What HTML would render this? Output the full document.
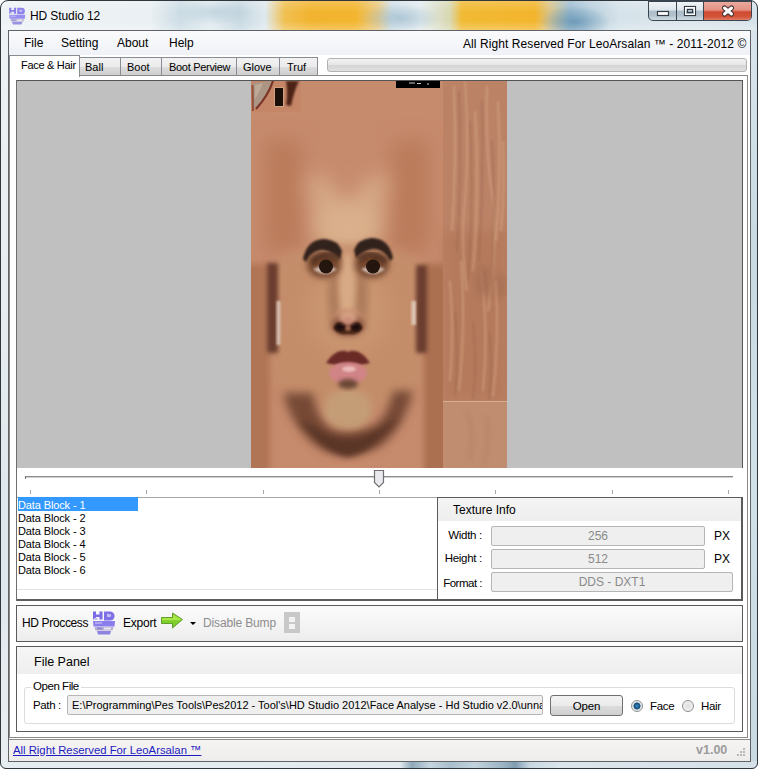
<!DOCTYPE html>
<html><head><meta charset="utf-8">
<style>
*{margin:0;padding:0;box-sizing:border-box}
html,body{width:758px;height:769px;overflow:hidden;background:#fff}
body{font-family:"Liberation Sans",sans-serif;font-size:12px;color:#000;position:relative}
.a{position:absolute}
.frame{left:0;top:0;width:758px;height:769px;border-radius:8px 8px 6px 6px;overflow:hidden;background:#e0e9ee}
.fb{left:0;top:0;width:758px;height:769px;border:1px solid #2f363c;border-radius:8px 8px 6px 6px}
.t{white-space:nowrap;line-height:1}
.tab{height:18px;border:1px solid #898c95;border-bottom:none;background:linear-gradient(#f2f2f2,#ebebeb 50%,#dddddd 51%,#cfcfcf);font-size:11px}
.tabact{border:1px solid #898c95;border-bottom:none;background:#fff;font-size:11px}
.lb{font-size:11px;line-height:13px;white-space:nowrap;letter-spacing:-0.12px}
.tb{border:1px solid #b5b5b5;border-radius:2px;background:#efefef;color:#8a8a8a;text-align:center;line-height:18px;font-size:12px;white-space:nowrap}
</style></head><body>
<div class="a frame">
  <div class="a" style="left:0;top:0;width:758px;height:30px;background:linear-gradient(90deg,#eef3f5 0,#eaf0f3 150px,#cddde5 180px,#e1ebf0 210px,#c8d9e2 240px,#dfe9ee 265px,#f0c050 285px,#f2b430 310px,#f3b52e 355px,#e8c982 378px,#cfe0e8 392px,#e3ecf0 420px,#d8d8b0 450px,#f1ba34 462px,#f3b52c 535px,#d8c48a 550px,#9dbdd2 570px,#b9d0dd 590px,#d6e3ea 620px,#dde7ec 700px,#d5e2e9 758px)"></div>
  <div class="a" style="left:0;top:0;width:758px;height:30px;background:radial-gradient(ellipse 40px 14px at 400px 18px,rgba(150,180,200,.6),rgba(150,180,200,0)),radial-gradient(ellipse 35px 16px at 575px 22px,rgba(90,140,175,.7),rgba(90,140,175,0)),radial-gradient(ellipse 40px 12px at 215px 12px,rgba(170,195,210,.5),rgba(170,195,210,0)),linear-gradient(rgba(255,255,255,.2),rgba(255,255,255,0) 40%,rgba(255,255,255,0) 70%,rgba(255,255,255,.25))"></div>
  <div class="a" style="left:0;top:30px;width:8px;height:739px;background:linear-gradient(#eef2f4,#e6ecf0 40%,#dfe7ec 70%,#eaeef2)"></div>
  <div class="a" style="left:750px;top:30px;width:8px;height:739px;background:linear-gradient(#d9e5eb,#c8d9e2 30%,#d2e0e8 60%,#c9d9e1)"></div>
  <div class="a" style="left:0;top:761px;width:758px;height:8px;background:linear-gradient(90deg,#e6edf0 0,#e2eaee 400px,#8fa9ba 412px,#c7d6df 430px,#a9bfcd 450px,#c2d3dc 475px,#98b1c1 505px,#7f9db1 515px,#c9d8e0 530px,#dbe5ea 560px,#d6e1e7 758px)"></div>
</div>
<div class="a fb"></div>
<!-- title -->
<div class="a t" style="left:30px;top:10px;font-size:12px;color:#000;letter-spacing:-0.1px;text-shadow:0 0 6px #fff,0 0 10px #fff">HD Studio 12</div>
<!-- caption buttons -->
<div class="a" style="left:648px;top:0;width:104px;height:21px;border:1px solid #3b4550;border-top:2px solid #3b4550;border-radius:0 0 5px 5px;overflow:hidden;background:linear-gradient(#eef3f6,#dfe7ec 45%,#aebfca 50%,#b3c3ce 75%,#cfdbe2)">
  <div class="a" style="left:27px;top:0;width:1px;height:20px;background:#3b4550"></div>
  <div class="a" style="left:54px;top:0;width:48px;height:20px;border-left:1px solid #3b4550;background:linear-gradient(#eba99e,#e39283 40%,#cf4a30 50%,#d4553a 75%,#e59a88)"></div>
</div>
<svg class="a" style="left:648px;top:0" width="104" height="21">
  <rect x="9.5" y="11.5" width="11" height="4" fill="#fff" stroke="#333c45" stroke-width="1.2"/>
  <rect x="36.5" y="6.5" width="11" height="9" fill="none" stroke="#333c45" stroke-width="1.2"/>
  <rect x="37.5" y="7.5" width="9" height="7" fill="none" stroke="#fff" stroke-width="1"/>
  <rect x="39.5" y="9.5" width="5" height="3" fill="none" stroke="#333c45" stroke-width="1.2"/>
  <path d="M76.5 8 L83.5 14 M83.5 8 L76.5 14" stroke="#3a2a2a" stroke-width="5" stroke-linecap="round"/>
  <path d="M76.5 8 L83.5 14 M83.5 8 L76.5 14" stroke="#fff" stroke-width="3" stroke-linecap="round"/>
</svg>
<!-- title icon -->
<svg class="a" style="left:7px;top:6px;opacity:.85" width="20.4" height="20.4" viewBox="0 0 28 28">
<path d="M3 2.5 h3 v3 h3.5 v-3 h3 v8 h-3 v-2.5 h-3.5 v2.5 h-3z" fill="#7a6be6"/>
<path d="M14 2.5 h6 a4.5 4 0 0 1 4.5 4 v1 a4.5 4 0 0 1 -4.5 4 h-6z" fill="#7f70e8"/>
<path d="M17 5 h2.5 a1.6 1.4 0 0 1 0 3 h-2.5z" fill="#c4bcf2"/>
<path d="M4 9 h4 l-1 2 h-3z" fill="#c9c4e8"/>
<path d="M3 12 h22 l-0.5 5.5 h-21z" fill="#8a7dec"/>
<rect x="5" y="13.2" width="7" height="1.6" fill="#b9b0f2"/>
<path d="M4.5 18 h19 l-1 3.5 h-17z" fill="#b5b0d0"/>
<rect x="7" y="18.5" width="5" height="2" fill="#8f86d8"/>
<rect x="14" y="18.5" width="7" height="2" fill="#e8e6f2"/>
<path d="M7 22 h14 l-1 3.5 h-12z" fill="#8e82e2"/>
</svg>
<!-- client -->
<div class="a" style="left:8px;top:30px;width:743px;height:732px;background:#fff;border:1px solid #5f6368"></div>
<!-- menu bar -->
<div class="a" style="left:9px;top:31px;width:741px;height:24px;background:linear-gradient(#fbfbfd,#eef1f6)"></div>
<div class="a t" style="left:24px;top:37px">File</div>
<div class="a t" style="left:61px;top:37px">Setting</div>
<div class="a t" style="left:117px;top:37px">About</div>
<div class="a t" style="left:169px;top:37px">Help</div>
<div class="a t" style="left:463px;top:38px;letter-spacing:0.08px">All Right Reserved For LeoArsalan ™ - 2011-2012 ©</div>


<!-- tabs strip -->
<div class="a" style="left:9px;top:75px;width:739px;height:663px;border:1px solid #8a8a8a;background:#fff"></div>
<div class="a tab" style="left:79px;top:57px;width:42px"><span class="a t" style="left:5px;top:4px">Ball</span></div>
<div class="a tab" style="left:120px;top:57px;width:42px"><span class="a t" style="left:6px;top:4px">Boot</span></div>
<div class="a tab" style="left:161px;top:57px;width:76px"><span class="a t" style="left:7px;top:4px;letter-spacing:-0.3px">Boot Perview</span></div>
<div class="a tab" style="left:236px;top:57px;width:44px"><span class="a t" style="left:6px;top:4px">Glove</span></div>
<div class="a tab" style="left:279px;top:57px;width:39px"><span class="a t" style="left:7px;top:4px">Truf</span></div>
<div class="a tabact" style="left:9px;top:55px;width:71px;height:22px"><span class="a t" style="left:11px;top:4px;letter-spacing:-0.3px">Face &amp; Hair</span></div>
<!-- progress bar -->
<div class="a" style="left:327px;top:58px;width:420px;height:14px;border:1px solid #b2b2b2;border-radius:3px;background:linear-gradient(#f3f3f3,#e6e6e6 50%,#d4d4d4 51%,#e2e2e2)"></div>

<!-- picture box -->
<div class="a" style="left:16px;top:80px;width:727px;height:388px;background:#c0c0c0;border-top:1px solid #555;border-right:1px solid #555;"></div>
<svg class="a" style="left:251px;top:81px" width="256" height="387" viewBox="0 0 256 387">
<defs>
<filter id="b1" x="-20%" y="-20%" width="140%" height="140%"><feGaussianBlur stdDeviation="0.8"/></filter>
<filter id="b2" x="-30%" y="-30%" width="160%" height="160%"><feGaussianBlur stdDeviation="2"/></filter>
<filter id="b3" x="-30%" y="-30%" width="160%" height="160%"><feGaussianBlur stdDeviation="3"/></filter>
<filter id="b5" x="-40%" y="-40%" width="180%" height="180%"><feGaussianBlur stdDeviation="5"/></filter>
<filter id="b10" x="-50%" y="-50%" width="200%" height="200%"><feGaussianBlur stdDeviation="10"/></filter>
<clipPath id="fc"><rect width="192" height="387"/></clipPath>
</defs>
<rect width="256" height="387" fill="#c6866a"/>
<g clip-path="url(#fc)">
<rect x="0" y="0" width="192" height="387" fill="#c68a6c"/>
<rect x="15" y="60" width="35" height="110" fill="#b97a5a" filter="url(#b10)"/>
<rect x="142" y="60" width="35" height="110" fill="#b97a5a" filter="url(#b10)"/>
<path d="M55 95 Q70 92 80 100 L96 130 L112 100 Q122 92 138 95 L122 165 L72 165Z" fill="#d6a985" filter="url(#b10)"/>
<ellipse cx="96" cy="145" rx="30" ry="22" fill="#dab18c" filter="url(#b10)"/>
<path d="M22 182 Q40 168 70 165 L124 165 Q152 168 172 182 L172 300 Q150 330 97 330 Q45 330 22 300Z" fill="#c48d6b" filter="url(#b5)"/>
<rect x="-5" y="183" width="24" height="210" fill="#b07554" filter="url(#b3)"/>
<rect x="173" y="183" width="25" height="210" fill="#aa6f50" filter="url(#b3)"/>
<rect x="16" y="182" width="11" height="90" fill="#6a3e2e" filter="url(#b2)"/>
<rect x="165" y="184" width="11" height="88" fill="#6a3e2e" filter="url(#b2)"/>
<rect x="25.5" y="220" width="4" height="44" fill="#eadbd0" opacity=".75" filter="url(#b1)"/>
<rect x="160.5" y="220" width="4.5" height="24" fill="#eadbd0" opacity=".75" filter="url(#b1)"/>
<ellipse cx="97" cy="230" rx="42" ry="45" fill="#c9946f" filter="url(#b10)"/>
<path d="M32 312 Q42 350 70 368 Q97 380 128 366 Q152 350 162 310 L142 310 Q136 338 122 345 Q100 352 82 348 Q66 340 62 312Z" fill="#764836" filter="url(#b5)"/>
<path d="M48 338 Q72 372 97 376 Q122 372 148 335 L132 346 Q112 358 97 358 Q80 358 64 346Z" fill="#5a3426" filter="url(#b3)"/>
<ellipse cx="97" cy="328" rx="24" ry="20" fill="#c49c76" filter="url(#b3)"/>
<ellipse cx="84" cy="215" rx="6" ry="26" fill="#a87657" filter="url(#b5)"/>
<ellipse cx="110" cy="215" rx="6" ry="26" fill="#a87657" filter="url(#b5)"/>
<ellipse cx="96" cy="205" rx="8" ry="34" fill="#d8ab86" filter="url(#b3)"/>
<ellipse cx="97" cy="238" rx="15" ry="10" fill="#cc9474" filter="url(#b2)"/>
<ellipse cx="97" cy="244" rx="17" ry="11" fill="#8a5540" filter="url(#b3)"/>
<ellipse cx="97" cy="236" rx="9" ry="7" fill="#d49f80" filter="url(#b2)"/>
<path d="M82 247 Q87 237 95 243 Q97 247 99 243 Q107 237 112 247 Q107 255 97 253 Q87 255 82 247Z" fill="#4a2618" filter="url(#b1)"/>
<ellipse cx="89" cy="246" rx="4.5" ry="3.5" fill="#1e0e08" filter="url(#b1)"/>
<ellipse cx="105" cy="246" rx="4.5" ry="3.5" fill="#1e0e08" filter="url(#b1)"/>
<ellipse cx="97" cy="247" rx="2.5" ry="3" fill="#a06a55" filter="url(#b1)"/>
<ellipse cx="97" cy="240" rx="7" ry="3" fill="#c98878" filter="url(#b2)"/>
<ellipse cx="73" cy="184" rx="17" ry="13" fill="#74472f" filter="url(#b3)"/>
<ellipse cx="121" cy="184" rx="17" ry="13" fill="#74472f" filter="url(#b3)"/>
<path d="M52 178 Q56 158 74 158 Q87 159 91 170 L89 178 Q80 169 70 169 Q60 170 55 181Z" fill="#33201a" filter="url(#b1)"/>
<path d="M142 177 Q138 157 120 157 Q107 158 103 169 L105 177 Q114 168 124 168 Q134 169 139 180Z" fill="#33201a" filter="url(#b1)"/>
<path d="M62 188 Q74 182 86 188 Q74 198 62 188Z" fill="#cfb6a8" filter="url(#b1)"/>
<path d="M110 188 Q122 182 134 188 Q122 198 110 188Z" fill="#cfb6a8" filter="url(#b1)"/>
<path d="M58 188 Q70 170 90 183 Q81 176 74 177 Q66 178 58 188Z" fill="#2a1a14" filter="url(#b1)"/>
<path d="M60 181 Q74 168 89 178" stroke="#4a2c1e" stroke-width="4" fill="none" filter="url(#b2)"/>
<path d="M106 183 Q124 170 138 188 Q129 177 122 177 Q114 178 106 183Z" fill="#2a1a14" filter="url(#b1)"/>
<path d="M107 178 Q122 168 136 181" stroke="#4a2c1e" stroke-width="4" fill="none" filter="url(#b2)"/>
<circle cx="75" cy="185.5" r="7" fill="#24150f"/>
<circle cx="122" cy="185.5" r="7" fill="#24150f"/>
<path d="M75 282 Q86 266 97 271 Q108 266 119 282 Q108 285 97 284 Q86 285 75 282Z" fill="#6a2a26" filter="url(#b1)"/>
<ellipse cx="97" cy="292" rx="19" ry="11" fill="#d08486" filter="url(#b1)"/>
<ellipse cx="98" cy="288" rx="7" ry="3" fill="#eab9b8" filter="url(#b1)"/>
<ellipse cx="97" cy="303" rx="10" ry="5" fill="#6a4634" filter="url(#b2)"/>

</g>
<rect x="192" width="64" height="387" fill="#bb8266"/>
<rect x="192" y="150" width="64" height="170" fill="#b27657" opacity=".6" filter="url(#b5)"/>
<g filter="url(#b1)" fill="none">
<g stroke="#d9ab88" stroke-width="1.6" opacity=".65">
<path d="M203 5 Q206 80 201 150"/><path d="M214 0 Q219 70 213 130 Q210 170 216 210"/><path d="M224 30 Q229 110 222 190"/>
<path d="M236 5 Q234 70 242 120 Q247 170 237 230"/><path d="M247 20 Q251 90 245 160"/><path d="M252 60 Q254 110 250 150"/>
<path d="M199 200 Q203 250 199 300"/><path d="M210 180 Q215 240 208 310"/><path d="M230 190 Q238 250 232 310"/><path d="M245 200 Q248 260 242 315"/>
</g>
<g stroke="#93604a" stroke-width="1.5" opacity=".5">
<path d="M208 10 Q211 90 206 170"/><path d="M219 40 Q223 120 217 200"/><path d="M231 20 Q233 100 228 180"/><path d="M241 60 Q245 140 240 220"/>
<path d="M204 230 Q208 280 204 315"/><path d="M222 240 Q226 290 222 318"/><path d="M238 250 Q242 290 238 318"/>
</g>
</g>
<ellipse cx="232" cy="200" rx="7" ry="16" fill="#9a6650" opacity=".5" filter="url(#b3)"/>
<ellipse cx="250" cy="205" rx="5" ry="12" fill="#9a6650" opacity=".45" filter="url(#b3)"/>
<rect x="192" y="321" width="64" height="66" fill="#c08d70"/>
<path d="M215 330 Q225 350 218 380 M235 335 Q240 360 232 385" stroke="#a87458" stroke-width="2" fill="none" opacity=".5" filter="url(#b2)"/>
<rect x="192" y="320" width="64" height="1" fill="#d8ad90"/>
<rect x="145" y="0" width="44" height="7" fill="#000"/>
<path d="M158 2 h6 M166 2.5 h4 M176 3 h2" stroke="#ccc" stroke-width="1"/>
<rect x="0" y="0" width="50" height="31" fill="#c48466" opacity=".6"/>
<path d="M2 2 L22 0 Q18 14 6 27 L2 26Z" fill="#ab9584"/>
<path d="M4 4 L12 2 Q8 12 4 18Z" fill="#c2ae9c" opacity=".8"/>
<path d="M22 0 Q17 15 5 28" stroke="#7a3428" stroke-width="2.2" fill="none"/>
<path d="M2 30 L1.5 4" stroke="#94503c" stroke-width="2" fill="none"/>
<rect x="24" y="7" width="8" height="18" fill="#1a0e08"/>
<rect x="23.5" y="6.5" width="9" height="19" fill="none" stroke="#e0b890" stroke-width="1" opacity=".5"/>
<path d="M35 0 L48 0 Q43 10 40 25 L35 24 Q37 12 35 0Z" fill="#4e2418" filter="url(#b1)"/>
</svg>

<!-- slider -->
<svg class="a" style="left:0;top:466px" width="758" height="32">
<rect x="25" y="10" width="708" height="1" fill="#8c8c8c"/>
<rect x="25" y="11" width="708" height="1" fill="#cfcfcf"/>
<rect x="25" y="10" width="1" height="3" fill="#7a7a7a"/>
<rect x="30" y="24" width="1" height="4" fill="#a8a8a8"/><rect x="146" y="24" width="1" height="4" fill="#a8a8a8"/><rect x="263" y="24" width="1" height="4" fill="#a8a8a8"/><rect x="379" y="24" width="1" height="4" fill="#a8a8a8"/><rect x="495" y="24" width="1" height="4" fill="#a8a8a8"/><rect x="612" y="24" width="1" height="4" fill="#a8a8a8"/><rect x="728" y="24" width="1" height="4" fill="#a8a8a8"/>
<path d="M374.5 4.5 h9 v12 l-4.5 4.5 l-4.5 -4.5 z" fill="#e9e9ee" stroke="#6f6f6f" stroke-width="1.2"/>
</svg>
<!-- listbox -->
<div class="a" style="left:16px;top:497px;width:422px;height:104px;border-top:1px solid #a8a8a8;border-bottom:2px solid #5e5e5e;background:#fff"></div>
<div class="a" style="left:16px;top:80px;width:1px;height:521px;background:#6e6e6e"></div>
<div class="a" style="left:17px;top:589px;width:420px;height:1px;background:#e3e3e3"></div>
<div class="a" style="left:18px;top:497px;width:120px;height:14px;background:#3399ff"></div>
<div class="a lb" style="left:18px;top:499px;color:#fff">Data Block - 1</div>
<div class="a lb" style="left:18px;top:512px">Data Block - 2</div>
<div class="a lb" style="left:18px;top:525px">Data Block - 3</div>
<div class="a lb" style="left:18px;top:538px">Data Block - 4</div>
<div class="a lb" style="left:18px;top:551px">Data Block - 5</div>
<div class="a lb" style="left:18px;top:564px">Data Block - 6</div>

<!-- texture info -->
<div class="a" style="left:437px;top:497px;width:306px;height:104px;border:2px solid #5a5a5a;border-width:1px 2px 2px 1px;background:#fff"></div>
<div class="a" style="left:438px;top:498px;width:303px;height:23px;background:linear-gradient(#f4f4f4,#eeeeee)"></div>
<div class="a t" style="left:453px;top:504px;font-size:12px">Texture Info</div>
<div class="a t" style="left:382px;width:100px;text-align:right;top:530px;font-size:11.5px;letter-spacing:-0.3px">Width :</div>
<div class="a t" style="left:382px;width:100px;text-align:right;top:553px;font-size:11.5px;letter-spacing:-0.3px">Height :</div>
<div class="a t" style="left:382px;width:100px;text-align:right;top:578px;font-size:11.5px;letter-spacing:-0.5px">Format :</div>
<div class="a tb" style="left:491px;top:526px;width:214px;height:20px">256</div>
<div class="a tb" style="left:491px;top:549px;width:214px;height:20px">512</div>
<div class="a tb" style="left:491px;top:572px;width:242px;height:20px">DDS - DXT1</div>
<div class="a t" style="left:714px;top:530px;font-size:12px">PX</div>
<div class="a t" style="left:714px;top:553px;font-size:12px">PX</div>

<!-- toolstrip -->
<div class="a" style="left:16px;top:605px;width:727px;height:37px;border:1px solid #5a5a5a;background:linear-gradient(#fbfbfb,#f3f3f3 60%,#ececec)"></div>
<div class="a t" style="left:22px;top:617px;letter-spacing:-0.35px">HD Proccess</div>
<div class="a t" style="left:123px;top:617px;letter-spacing:-0.2px">Export</div>
<svg class="a" style="left:90px;top:609px" width="28" height="28" viewBox="0 0 28 28">
<path d="M3 2.5 h3 v3 h3.5 v-3 h3 v8 h-3 v-2.5 h-3.5 v2.5 h-3z" fill="#7a6be6"/>
<path d="M14 2.5 h6 a4.5 4 0 0 1 4.5 4 v1 a4.5 4 0 0 1 -4.5 4 h-6z" fill="#7f70e8"/>
<path d="M17 5 h2.5 a1.6 1.4 0 0 1 0 3 h-2.5z" fill="#c4bcf2"/>
<path d="M4 9 h4 l-1 2 h-3z" fill="#c9c4e8"/>
<path d="M3 12 h22 l-0.5 5.5 h-21z" fill="#8a7dec"/>
<rect x="5" y="13.2" width="7" height="1.6" fill="#b9b0f2"/>
<path d="M4.5 18 h19 l-1 3.5 h-17z" fill="#b5b0d0"/>
<rect x="7" y="18.5" width="5" height="2" fill="#8f86d8"/>
<rect x="14" y="18.5" width="7" height="2" fill="#e8e6f2"/>
<path d="M7 22 h14 l-1 3.5 h-12z" fill="#8e82e2"/>
</svg>
<svg class="a" style="left:159px;top:611px" width="26" height="19" viewBox="0 0 26 19">
<path d="M2.5 6.5 h11 v-4.5 l10 6.5 l-10 8.5 v-4.5 h-11z" fill="#7ccf2a" stroke="#4d8d12" stroke-width="0.8"/>
<path d="M3 7 h11 v-3.5 l8.5 5 l-1 0.8 h-18.5z" fill="#a9e64a"/>
</svg>
<div class="a t" style="left:203px;top:617px;color:#8d8d8d;letter-spacing:-0.15px">Disable Bump</div>
<div class="a" style="left:190px;top:622px;width:0;height:0;border-left:3px solid transparent;border-right:3px solid transparent;border-top:3px solid #000"></div>
<div class="a" style="left:284px;top:612px;width:16px;height:21px;background:#c8c8c8;border-radius:1px"></div>
<div class="a" style="left:289px;top:617px;width:6px;height:5px;background:#f2f2f2"></div>
<div class="a" style="left:289px;top:624px;width:6px;height:5px;background:#f2f2f2"></div>

<!-- file panel -->
<div class="a" style="left:16px;top:646px;width:727px;height:86px;border:1px solid #5a5a5a;background:#fff"></div>
<div class="a" style="left:17px;top:647px;width:725px;height:27px;background:linear-gradient(#f6f6f6,#eeeeee)"></div>
<div class="a t" style="left:34px;top:656px;font-size:12.5px">File Panel</div>
<div class="a" style="left:24px;top:687px;width:711px;height:37px;border:1px solid #dcdcdc;border-radius:3px"></div>
<div class="a t" style="left:31px;top:681px;padding:0 2px;background:#fff;font-size:11.5px;letter-spacing:-0.45px">Open File</div>
<div class="a t" style="left:33px;top:700px;font-size:11.5px;letter-spacing:-0.35px">Path :</div>
<div class="a tb" style="left:67px;top:695px;width:476px;height:20px;text-align:left;padding-left:4px;color:#000;font-size:11px;overflow:hidden">E:\Programming\Pes Tools\Pes2012 - Tool's\HD Studio 2012\Face Analyse - Hd Studio v2.0\unnamed</div>
<div class="a" style="left:550px;top:695px;width:73px;height:21px;border:1px solid #707070;border-radius:3px;background:linear-gradient(#f2f2f2,#ebebeb 50%,#dddddd 51%,#cfcfcf);text-align:center;line-height:20px;font-size:11.5px;letter-spacing:-0.2px">Open</div>
<div class="a" style="left:631px;top:700px;width:12px;height:12px;border-radius:50%;border:1px solid #8e8f8f;background:radial-gradient(circle,#3d8fc4 0,#1d5b8c 2.2px,#174e7a 3.2px,#d8dde2 3.8px,#eef0f2 5px)"></div>
<div class="a t" style="left:650px;top:701px;font-size:11.5px;letter-spacing:-0.3px">Face</div>
<div class="a" style="left:682px;top:700px;width:12px;height:12px;border-radius:50%;border:1px solid #8e8f8f;background:radial-gradient(circle,#e0e0e0 0,#f6f6f6)"></div>
<div class="a t" style="left:701px;top:701px;font-size:11.5px;letter-spacing:-0.3px">Hair</div>

<!-- status bar -->
<div class="a" style="left:9px;top:739px;width:741px;height:22px;background:linear-gradient(#f6f3f3,#efecec);border-top:1px solid #8c8c8c"></div>
<div class="a t" style="left:13px;top:745px;color:#1c1cc0;text-decoration:underline;font-size:11.3px">All Right Reserved For LeoArsalan ™</div>
<div class="a t" style="left:696px;top:744px;color:#9c9c9c;font-weight:bold;font-size:12.5px">v1.00</div>
<svg class="a" style="left:735px;top:747px" width="12" height="12"><g fill="#b8b8b8"><rect x="8" y="1" width="2" height="2"/><rect x="5" y="4" width="2" height="2"/><rect x="8" y="4" width="2" height="2"/><rect x="2" y="7" width="2" height="2"/><rect x="5" y="7" width="2" height="2"/><rect x="8" y="7" width="2" height="2"/></g></svg>
</body></html>
